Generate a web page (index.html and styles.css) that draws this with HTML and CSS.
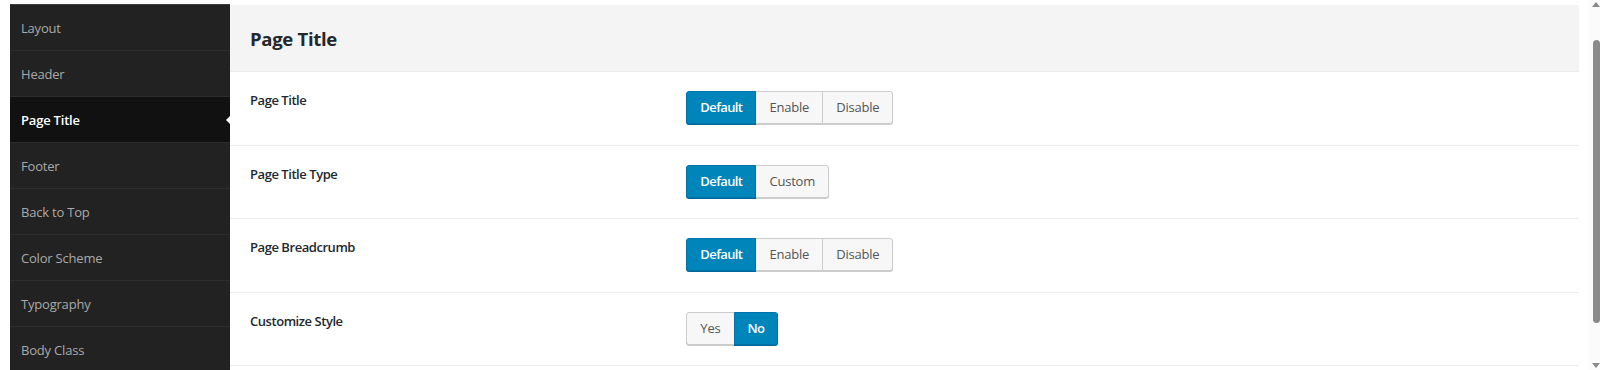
FILE: index.html
```html
<!DOCTYPE html>
<html lang="en">
<head>
<meta charset="UTF-8">
<meta name="viewport" content="width=device-width, initial-scale=1.0">
<title>Theme Options - Page Title</title>
<link rel="stylesheet" href="styles.css">
</head>
<body>

<div class="page">
    <!-- Options navigation -->
    <ul class="sidebar">
        <li>Layout</li>
        <li>Header</li>
        <li class="active">Page Title</li>
        <li>Footer</li>
        <li>Back to Top</li>
        <li>Color Scheme</li>
        <li>Typography</li>
        <li>Body Class</li>
    </ul>

    <!-- Options panel -->
    <div class="panel">
        <div class="panel-head">
            <h2>Page Title</h2>
        </div>

        <div class="field">
            <label>Page Title</label>
            <div class="btn-group">
                <span class="btn on">Default</span>
                <span class="btn">Enable</span>
                <span class="btn">Disable</span>
            </div>
        </div>

        <div class="field">
            <label>Page Title Type</label>
            <div class="btn-group">
                <span class="btn on">Default</span>
                <span class="btn">Custom</span>
            </div>
        </div>

        <div class="field">
            <label>Page Breadcrumb</label>
            <div class="btn-group">
                <span class="btn on">Default</span>
                <span class="btn">Enable</span>
                <span class="btn">Disable</span>
            </div>
        </div>

        <div class="field">
            <label>Customize Style</label>
            <div class="btn-group">
                <span class="btn">Yes</span>
                <span class="btn on">No</span>
            </div>
        </div>
    </div>

    <!-- Window scrollbar -->
    <div class="scrollbar">
        <span class="arrow up"></span>
        <span class="thumb"></span>
        <span class="arrow down"></span>
    </div>
</div>

</body>
</html>
```

FILE: styles.css
```css
html, body {
    margin: 0;
    height: 100%;
    overflow: hidden;
}
body {
    font-family: "Open Sans", "Noto Sans", Arial, sans-serif;
    font-size: 13px;
    color: #23282d;
    background: #fff;
}
.page {
    display: flex;
    height: 100%;
    padding-left: 10px;
    box-sizing: border-box;
}
.sidebar {
    list-style: none;
    margin: 4px 0 0;
    padding: 0;
    width: 220px;
    flex: none;
    background: #222;
    border-top: 1px solid #3c3c3c;
}
.sidebar li {
    position: relative;
    height: 44px;
    line-height: 44px;
    padding: 1px 0 0 11px;
    color: #a9a9a9;
    border-bottom: 1px solid #2d2d2d;
    letter-spacing: -0.2px;
}
.sidebar li.active {
    background: #111;
    color: #fff;
    font-weight: 600;
}
.sidebar li.active:after {
    content: "";
    position: absolute;
    right: 0;
    top: 19px;
    border: 4px solid transparent;
    border-right-color: #fff;
    border-left: none;
}
.panel {
    flex: 1;
    margin-top: 5px;
}
.panel-head {
    height: 66px;
    display: flex;
    align-items: center;
    padding: 0 20px;
    background: #f4f4f4;
    border-bottom: 1px solid #ececec;
}
.panel-head h2 {
    margin: 0;
    font-size: 18.5px;
    font-weight: 700;
    letter-spacing: -0.3px;
}
.field {
    display: grid;
    grid-template-columns: 1fr 2fr;
    padding: 19px 20px 20.5px;
    border-bottom: 1px solid #ececec;
}
.field label {
    font-weight: 600;
    line-height: 18px;
    letter-spacing: -0.45px;
}
.btn-group {
    display: flex;
}
.btn {
    height: 31px;
    line-height: 31px;
    padding: 0 13px;
    background: #f7f7f7;
    border: 1px solid #ccc;
    color: #555;
    margin-left: -1px;
    letter-spacing: -0.2px;
    box-shadow: 0 1px 0 #ccc;
}
.btn:first-child {
    margin-left: 0;
    border-radius: 3px 0 0 3px;
}
.btn:last-child {
    border-radius: 0 3px 3px 0;
}
.btn.on {
    position: relative;
    background: #0085ba;
    border-color: #0073aa;
    color: #fff;
    font-weight: 600;
    letter-spacing: -0.6px;
    box-shadow: 0 1px 0 #006799;
}
.scrollbar {
    width: 11px;
    flex: none;
    margin-left: 10px;
    background: #fbfbfb;
    display: flex;
    flex-direction: column;
    align-items: center;
}
.arrow {
    width: 0;
    height: 0;
    border-left: 4px solid transparent;
    border-right: 4px solid transparent;
    margin-left: 2px;
}
.arrow.up {
    margin-top: 2px;
    border-bottom: 5px solid #8a8a8a;
}
.arrow.down {
    margin-top: auto;
    margin-bottom: 2px;
    border-top: 5px solid #8a8a8a;
}
.thumb {
    width: 7px;
    height: 283px;
    margin: 33px 0 0 3px;
    background: #8a8a8a;
    border-radius: 4px;
}
```
